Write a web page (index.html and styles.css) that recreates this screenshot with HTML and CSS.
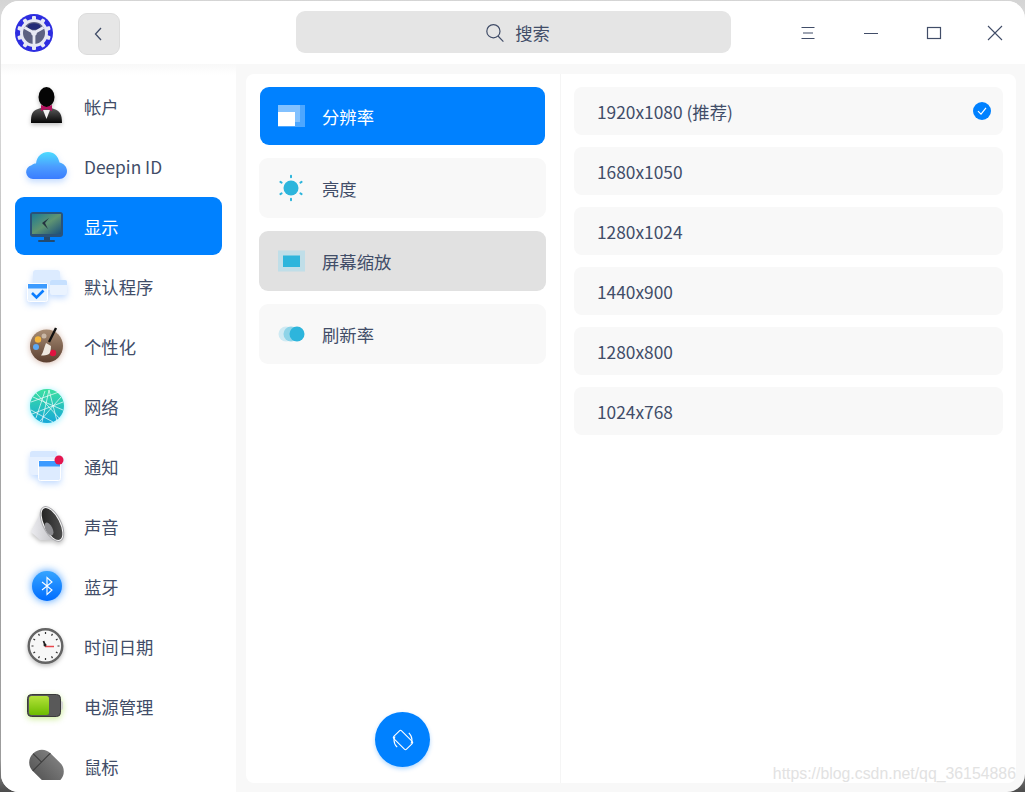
FILE: index.html
```html
<!DOCTYPE html>
<html lang="zh">
<head>
<meta charset="utf-8">
<title>控制中心</title>
<link rel="stylesheet" href="styles.css">
</head>
<body>
<div class="window">
  <header class="titlebar">
    <div class="title-left">
      <svg class="logo" viewBox="0 0 38 38" width="38" height="38">
        <circle cx="19" cy="19" r="19" fill="#2d2de0"/>
        <g fill="#e6e8f4">
          <circle cx="19" cy="19" r="14"/>
          <rect x="17" y="2" width="4" height="5" rx="1"/>
          <rect x="17" y="2" width="4" height="5" rx="1" transform="rotate(36 19 19)"/>
          <rect x="17" y="2" width="4" height="5" rx="1" transform="rotate(72 19 19)"/>
          <rect x="17" y="2" width="4" height="5" rx="1" transform="rotate(108 19 19)"/>
          <rect x="17" y="2" width="4" height="5" rx="1" transform="rotate(144 19 19)"/>
          <rect x="17" y="2" width="4" height="5" rx="1" transform="rotate(180 19 19)"/>
          <rect x="17" y="2" width="4" height="5" rx="1" transform="rotate(216 19 19)"/>
          <rect x="17" y="2" width="4" height="5" rx="1" transform="rotate(252 19 19)"/>
          <rect x="17" y="2" width="4" height="5" rx="1" transform="rotate(288 19 19)"/>
          <rect x="17" y="2" width="4" height="5" rx="1" transform="rotate(324 19 19)"/>
        </g>
        <circle cx="19" cy="19" r="11" fill="#5c6182"/>
        <ellipse cx="19" cy="12.500" rx="6.500" ry="3.200" fill="#232c78"/>
        <path d="M9.500 13.500 19 19l9.500-5.500M19 19v11" stroke="#e6e8f4" stroke-width="2.800" fill="none"/>
        <circle cx="19" cy="19" r="2.800" fill="#e6e8f4"/>
      </svg>
      <button class="back" type="button" aria-label="返回">
        <svg viewBox="0 0 12 16" width="12" height="16"><path d="M8 2 2.500 8 8 14" fill="none" stroke="#414d68" stroke-width="1.300"/></svg>
      </button>
    </div>
    <div class="search">
      <svg viewBox="0 0 20 20" width="20" height="20"><circle cx="8.400" cy="8.200" r="6.600" fill="none" stroke="#414d68" stroke-width="1.200"/><path d="m13 13 5.400 5.600" stroke="#414d68" stroke-width="1.200"/></svg>
      <span>搜索</span>
    </div>
    <div class="controls">
      <svg viewBox="0 0 16 16" width="16" height="16"><path d="M1.500 2.500h13M3 8h10M1.500 13.500h13" stroke="#414d68" stroke-width="1.100" fill="none"/></svg>
      <svg viewBox="0 0 16 16" width="16" height="16"><path d="M1 8.500h14" stroke="#414d68" stroke-width="1.200"/></svg>
      <svg viewBox="0 0 16 16" width="16" height="16"><rect x="1.500" y="2.500" width="13" height="11" fill="none" stroke="#414d68" stroke-width="1.200"/></svg>
      <svg class="close" viewBox="0 0 16 16" width="16" height="16"><path d="m1 1 14 14M15 1 1 15" stroke="#414d68" stroke-width="1.100"/></svg>
    </div>
  </header>

  <div class="body">
    <nav class="sidebar">
      <div class="nav-list">
        <div class="nav-item">
          <svg class="nav-icon glow-dark" viewBox="0 0 48 48"><defs><linearGradient id="suit" x1="0" y1="0" x2="0" y2="1"><stop offset="0" stop-color="#666"/><stop offset="1" stop-color="#050505"/></linearGradient></defs><path d="M9 41c0-9 1-12 7-14l8-3 8 3c6 2 8 5 8 14z" fill="url(#suit)"/><path d="m21 28 3.500 9 3.500-9z" fill="#f2f2f2"/><ellipse cx="24.500" cy="15" rx="8" ry="10" fill="#050505"/><path d="M21 20h7v7h-7z" fill="#050505"/><path d="m19 23 5.500 2 5.500-2v6l-5.500-2-5.500 2z" fill="#b5125f"/></svg>
          <span>帐户</span>
        </div>
        <div class="nav-item">
          <svg class="nav-icon glow-blue" viewBox="0 0 48 48"><defs><linearGradient id="cloud" x1="0" y1="0" x2="0" y2="1"><stop offset="0" stop-color="#4cdcff"/><stop offset=".55" stop-color="#4b9cff"/><stop offset="1" stop-color="#3a7cff"/></linearGradient></defs><path d="M11 37a7 7 0 0 1-1.500-13.800C11 22 12 21.500 14 21.500 15 14 20 10 26 10c6 0 10 4 11.500 10.500C42 21.500 45 25 45 29c0 4.500-3.500 8-8 8z" fill="url(#cloud)"/></svg>
          <span>Deepin ID</span>
        </div>
        <div class="nav-item is-active">
          <svg class="nav-icon" viewBox="0 0 48 48"><defs><linearGradient id="scr" x1="0" y1="0" x2="1" y2="1"><stop offset="0" stop-color="#1d7a92"/><stop offset=".5" stop-color="#5f9472"/><stop offset="1" stop-color="#1b4f7c"/></linearGradient></defs><rect x="8" y="10" width="33" height="25" rx="3" fill="#2a5279"/><rect x="10" y="12" width="29" height="20" fill="url(#scr)"/><rect x="22" y="35" width="6" height="3" fill="#234a70"/><rect x="16" y="38" width="17" height="2" rx="1" fill="#234a70"/><path d="m27 16-4 5 3 6-6-6z" fill="#24323f"/></svg>
          <span>显示</span>
        </div>
        <div class="nav-item">
          <svg class="nav-icon glow-blue" viewBox="0 0 48 48"><rect x="11" y="8" width="27" height="20" rx="3" fill="#dcebff"/><rect x="28" y="18" width="17" height="15" rx="2" fill="#eaf3ff"/><path d="M28 20a2 2 0 0 1 2-2h13a2 2 0 0 1 2 2v3H28z" fill="#c6e0ff"/><rect x="5.500" y="21.500" width="20" height="18" rx="2" fill="#e8f3ff" stroke="#fff"/><rect x="6" y="22" width="19" height="4.500" fill="#3d9bff"/><path d="m10 31 4.500 4.500 7-7" fill="none" stroke="#0b7dff" stroke-width="2.600"/></svg>
          <span>默认程序</span>
        </div>
        <div class="nav-item">
          <svg class="nav-icon glow-brown" viewBox="0 0 48 48"><defs><linearGradient id="pal" x1="0" y1="0" x2="0" y2="1"><stop offset="0" stop-color="#a78c74"/><stop offset="1" stop-color="#5b3f30"/></linearGradient></defs><circle cx="24.500" cy="24" r="16.500" fill="url(#pal)"/><circle cx="16" cy="17.500" r="3.200" fill="#f4b53c"/><circle cx="22" cy="14" r="2.500" fill="#c9b7a6"/><circle cx="14" cy="25" r="3" fill="#5da8f2"/><circle cx="31" cy="31" r="3.200" fill="#e01240"/><path d="M34 6 27 20" stroke="#111" stroke-width="2.400"/><path d="m24 21 5 3c0 4-1 7-2 8-2 1-5 1.500-8 1.500 2.500-3 3-8 5-12.500z" fill="#eee8e0"/></svg>
          <span>个性化</span>
        </div>
        <div class="nav-item">
          <svg class="nav-icon glow-cyan" viewBox="0 0 48 48"><defs><linearGradient id="globe" x1="0" y1="0" x2="0" y2="1"><stop offset="0" stop-color="#3de0a0"/><stop offset="1" stop-color="#15a8d8"/></linearGradient></defs><circle cx="25" cy="24" r="17" fill="url(#globe)"/><path d="M27 8 20 40M14 11l24 26M9 20l28-10M10 32l31-12M18 39 39 15M27 8l8 31M9 28l22 12M14 36 23 9M11 15l30 13" stroke="#fff" stroke-width=".8" opacity=".85" fill="none"/></svg>
          <span>网络</span>
        </div>
        <div class="nav-item">
          <svg class="nav-icon glow-blue" viewBox="0 0 48 48"><rect x="8" y="9" width="27" height="24" rx="3" fill="#e6f0ff"/><path d="M8 12a3 3 0 0 1 3-3h21a3 3 0 0 1 3 3v3H8z" fill="#d6e7ff"/><rect x="16.500" y="18.500" width="22" height="20" rx="2" fill="#ddebff" stroke="#fff"/><rect x="17" y="19" width="21" height="5.500" fill="#3d9bff"/><circle cx="37" cy="18" r="4.500" fill="#e4154f"/></svg>
          <span>通知</span>
        </div>
        <div class="nav-item">
          <svg class="nav-icon glow-dark" viewBox="0 0 48 48"><defs><linearGradient id="cone" x1="0" y1="0" x2="1" y2="1"><stop offset="0" stop-color="#1c1c1c"/><stop offset="1" stop-color="#555"/></linearGradient><linearGradient id="back" x1="0" y1="0" x2="1" y2="0"><stop offset="0" stop-color="#ececf0"/><stop offset="1" stop-color="#b4b4b8"/></linearGradient></defs><path d="M21 6 13 22l-4 8 9 8h22z" fill="url(#back)"/><ellipse cx="30" cy="22" rx="9" ry="19" transform="rotate(-27 30 22)" fill="#f6f6f6" stroke="#a8a8ac"/><ellipse cx="30" cy="22" rx="7.500" ry="17.500" transform="rotate(-27 30 22)" fill="url(#cone)"/><ellipse cx="27" cy="27" rx="3.500" ry="7" transform="rotate(-27 27 27)" fill="#8c8c90"/></svg>
          <span>声音</span>
        </div>
        <div class="nav-item">
          <svg class="nav-icon glow-bt" viewBox="0 0 48 48"><defs><linearGradient id="bt" x1="0" y1="0" x2="0" y2="1"><stop offset="0" stop-color="#35a4ff"/><stop offset="1" stop-color="#006cff"/></linearGradient></defs><circle cx="25" cy="24" r="15" fill="url(#bt)"/><path d="m20 20 10 8-5 4.500V15.500l5 4.500-10 8" fill="none" stroke="#fff" stroke-width="1.100"/></svg>
          <span>蓝牙</span>
        </div>
        <div class="nav-item">
          <svg class="nav-icon glow-dark" viewBox="0 0 48 48"><circle cx="23.500" cy="24" r="16.800" fill="#f7f7f7" stroke="#646464" stroke-width="2.400"/><g stroke="#333" stroke-width="1.200"><path d="M23.500 10v2M23.500 36v2M9.500 24h2M35.500 24h2M16.500 11.900l1 1.700M30.500 11.900l-1 1.700M16.500 36.100l1-1.700M30.500 36.100l-1-1.700M11.400 17l1.700 1M35.600 17l-1.700 1M11.400 31l1.700-1M35.600 31l-1.700-1"/></g><path d="m23 23-1.500-4" stroke="#222" stroke-width="1.800"/><path d="M23 24.500h9" stroke="#e8474c" stroke-width="1.500"/><circle cx="23" cy="23" r="1.500" fill="#222"/></svg>
          <span>时间日期</span>
        </div>
        <div class="nav-item">
          <svg class="nav-icon glow-green" viewBox="0 0 48 48"><defs><linearGradient id="bat" x1="0" y1="0" x2="0" y2="1"><stop offset="0" stop-color="#b4e23a"/><stop offset="1" stop-color="#6cbc00"/></linearGradient></defs><rect x="37" y="19" width="4" height="9" rx="2" fill="#d4d4d4"/><rect x="5.500" y="12.500" width="33" height="22" rx="4" fill="#595959" stroke="#3a3a3a"/><rect x="7" y="14" width="20" height="19" rx="2.500" fill="url(#bat)"/></svg>
          <span>电源管理</span>
        </div>
        <div class="nav-item">
          <svg class="nav-icon" viewBox="0 0 48 48"><defs><linearGradient id="mouse" x1="0" y1="0" x2="1" y2="0"><stop offset="0" stop-color="#5a5a5a"/><stop offset="1" stop-color="#7c7c7c"/></linearGradient></defs><g transform="rotate(-45 24.500 25)"><rect x="12" y="6" width="25" height="38" rx="12" fill="url(#mouse)"/><path d="M12 18h25M24.500 6v12" stroke="#3c3c3c" stroke-width="1" fill="none"/></g></svg>
          <span>鼠标</span>
        </div>
      </div>
    </nav>

    <main class="panel">
      <section class="modes">
        <div class="mode-list">
          <div class="mode is-active">
            <svg class="mode-icon" viewBox="0 0 28 28"><rect x="1" y="3" width="27" height="22" fill="#fff" opacity=".3"/><rect x="1" y="3" width="22" height="17" fill="#fff" opacity=".3"/><rect x="1" y="10" width="17" height="14" fill="#fff"/></svg>
            <span>分辨率</span>
          </div>
          <div class="mode">
            <svg class="mode-icon" viewBox="0 0 28 28"><circle cx="14" cy="14" r="7.500" fill="#2db5dc"/><g fill="none" stroke="#2db5dc" stroke-width="2" stroke-linecap="round"><path d="M14 1.800v1.400M14 24.800v1.400M3.400 7.900l1.200.7M23.400 19.400l1.200.7M3.400 20.100l1.200-.7M23.400 8.600l1.200-.7"/></g></svg>
            <span>亮度</span>
          </div>
          <div class="mode is-hover">
            <svg class="mode-icon" viewBox="0 0 28 28"><rect x="1" y="3.500" width="27" height="21" fill="#c0dee8"/><rect x="6" y="8.500" width="17" height="11.500" fill="#2db5dc"/></svg>
            <span>屏幕缩放</span>
          </div>
          <div class="mode">
            <svg class="mode-icon" viewBox="0 0 28 28"><circle cx="9" cy="14" r="7.500" fill="#cfeaf3"/><circle cx="14" cy="14" r="7.500" fill="#8ed4e8"/><circle cx="20" cy="14" r="7.500" fill="#2db5dc"/></svg>
            <span>刷新率</span>
          </div>
        </div>
        <button class="rotate" type="button" aria-label="旋转">
          <svg viewBox="0 0 24 24" width="24" height="24"><rect x="6.500" y="3" width="11" height="18" rx="1.500" transform="rotate(-45 12 12)" fill="none" stroke="#fff" stroke-width="1.100"/><path d="M4 8.500A9.500 9.500 0 0 0 3 12c0 2.800 1.200 5.300 3.200 7.200M20 15.500A9.500 9.500 0 0 0 21 12c0-2.800-1.200-5.300-3.200-7.200" fill="none" stroke="#fff" stroke-width="1.100"/></svg>
        </button>
      </section>
      <section class="resolutions">
        <div class="res">
          <span>1920x1080 (推荐)</span>
          <svg viewBox="0 0 18 18" width="18" height="18"><circle cx="9" cy="9" r="9" fill="#0081ff"/><path d="m5 9.200 3 3 5-6.400" fill="none" stroke="#fff" stroke-width="1.200"/></svg>
        </div>
        <div class="res"><span>1680x1050</span></div>
        <div class="res"><span>1280x1024</span></div>
        <div class="res"><span>1440x900</span></div>
        <div class="res"><span>1280x800</span></div>
        <div class="res"><span>1024x768</span></div>
      </section>
    </main>
  </div>
  <div class="watermark">https://blog.csdn.net/qq_36154886</div>
</div>
</body>
</html>
```

FILE: styles.css
```css
* { box-sizing: border-box; }

html, body {
  height: 100%;
}

body {
  margin: 0;
  overflow: hidden;
  background: linear-gradient(to bottom, #d4d4d4 0, #e4e4e4 40px, #a8a8a8 400px, #9c9c9c 760px, #4c4c4c 792px);
  font-family: "Noto Sans CJK SC", "Noto Sans", sans-serif;
  font-size: 17.33px;
  color: #414d68;
  padding: 1px 0 0 1px;
}

.window {
  position: relative;
  width: 1024px;
  height: 791px;
  border-radius: 18px;
  overflow: hidden;
  background: #f8f8f8;
  display: flex;
  flex-direction: column;
}

.titlebar {
  height: 63px;
  flex: none;
  background: #fff;
  display: grid;
  grid-template-columns: 1fr 435px 1fr;
  align-items: center;
}

.title-left {
  display: flex;
  align-items: center;
  padding-left: 14px;
  gap: 25px;
}

.logo { display: block; }

.back {
  width: 42px;
  height: 42px;
  margin-top: 3px;
  padding: 0;
  border: 1px solid #dcdcdc;
  border-radius: 9px;
  background: #e6e6e6;
  display: flex;
  align-items: center;
  justify-content: center;
}

.search {
  height: 42px;
  margin-top: -2px;
  padding: 2px 0 0 9px;
  border-radius: 9px;
  background: #e5e5e5;
  display: flex;
  align-items: center;
  justify-content: center;
  gap: 10px;
}

.controls {
  display: flex;
  justify-content: flex-end;
  gap: 47px;
  padding-right: 22px;
}

.close { margin-left: -2px; }

.body {
  flex: 1;
  min-height: 0;
  display: flex;
  gap: 10px;
}

.sidebar {
  width: 235px;
  flex: none;
  padding: 13px 14px 12px;
  background: linear-gradient(to bottom, #f8f8f8 0, #fff 11px);
  display: flex;
  flex-direction: column;
}

.nav-list {
  flex: 1;
  min-height: 0;
  overflow: hidden;
  display: flex;
  flex-direction: column;
  gap: 2px;
}

.nav-item {
  flex: none;
  height: 58px;
  border-radius: 9px;
  padding-left: 7px;
  display: flex;
  align-items: center;
  gap: 14px;
}

.nav-item.is-active {
  background: #0081ff;
  color: #fff;
}

.nav-icon {
  width: 48px;
  height: 48px;
  flex: none;
  overflow: visible;
}

.glow-dark { filter: drop-shadow(0 2px 2px rgba(0, 0, 0, .25)); }
.glow-blue { filter: drop-shadow(0 3px 3px rgba(60, 140, 255, .3)); }
.glow-brown { filter: drop-shadow(0 1px 3px rgba(150, 80, 50, .4)); }
.glow-cyan { filter: drop-shadow(0 1px 3px rgba(0, 220, 255, .45)); }
.glow-bt { filter: drop-shadow(0 0 4px rgba(0, 120, 255, .75)); }
.glow-green { filter: drop-shadow(0 2px 3px rgba(130, 210, 0, .4)); }

.panel {
  width: 770px;
  flex: none;
  margin: 10px 0 9px;
  border-radius: 8px;
  background: #fff;
  display: flex;
}

.modes {
  width: 314px;
  flex: none;
  padding: 12px 14px 16px 13px;
  display: flex;
  flex-direction: column;
  align-items: stretch;
}

.mode-list {
  flex: 1;
  display: flex;
  flex-direction: column;
  gap: 13px;
}

.mode {
  height: 60px;
  border-radius: 9px;
  background: #f8f8f8;
  padding-left: 18px;
  display: flex;
  align-items: center;
  gap: 17px;
}

.mode-icon {
  width: 28px;
  height: 28px;
  flex: none;
}

.mode.is-active {
  height: 58px;
  margin: 1px 1px 0;
  padding-left: 17px;
  background: #0081ff;
  color: #fff;
}

.mode.is-hover { background: #e1e1e1; }

.rotate {
  width: 55px;
  height: 55px;
  padding: 0;
  border: 0;
  border-radius: 50%;
  background: #0081ff;
  box-shadow: 0 2px 4px rgba(0, 129, 255, .3);
  align-self: center;
  display: flex;
  align-items: center;
  justify-content: center;
}

.resolutions {
  flex: 1;
  border-left: 1px solid #f5f5f5;
  padding: 13px 13px 0 13px;
  display: flex;
  flex-direction: column;
  gap: 12px;
}

.res {
  height: 48px;
  flex: none;
  border-radius: 8px;
  background: #f8f8f8;
  padding: 0 12px 0 23px;
  display: flex;
  align-items: center;
  justify-content: space-between;
}

.watermark {
  position: absolute;
  right: 9px;
  bottom: 9px;
  font-family: "Liberation Sans", sans-serif;
  font-size: 15.85px;
  color: #e2e2e2;
}
```
